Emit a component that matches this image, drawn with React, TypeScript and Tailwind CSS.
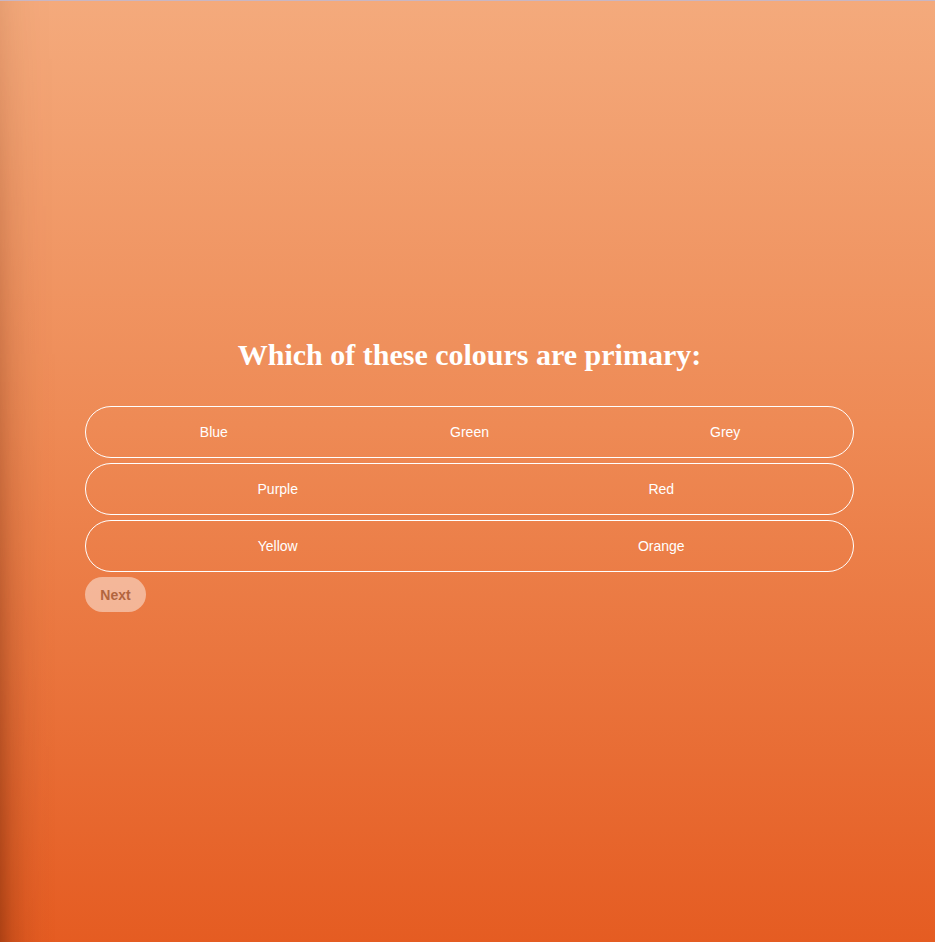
import { useState } from "react";

const rows: string[][] = [
  ["Blue", "Green", "Grey"],
  ["Purple", "Red"],
  ["Yellow", "Orange"],
];

const App = () => {
  const [picked, setPicked] = useState<string[]>([]);

  const toggle = (c: string) =>
    setPicked((p) => (p.includes(c) ? p.filter((x) => x !== c) : [...p, c]));

  return (
    <div className="relative min-h-screen h-[942px] overflow-hidden border-t border-[#c8b6c4] bg-[linear-gradient(to_bottom,#f4aa7c_0%,#ee8a55_45%,#e55c22_100%)]">
      <div className="pointer-events-none absolute inset-y-0 left-0 w-[56px] bg-[linear-gradient(to_right,rgba(90,25,0,0.4)_0px,rgba(90,25,0,0.2)_12px,rgba(90,25,0,0.08)_26px,rgba(90,25,0,0.02)_42px,rgba(90,25,0,0)_56px)] [mask-image:linear-gradient(to_bottom,rgba(0,0,0,0.2),rgba(0,0,0,1))]"></div>
      <div className="relative ml-[85px] w-[769px] pt-[335px] flex flex-col">
        <h1 className="text-center text-[30px] font-bold text-white leading-[38px] mb-[32px] font-['Liberation_Serif',serif]">
          Which of these colours are primary:
        </h1>
        <div className="flex flex-col gap-[5px]">
          {rows.map((row, i) => (
            <div
              key={i}
              className="flex h-[52px] items-center rounded-full border border-white"
            >
              {row.map((c) => (
                <button
                  key={c}
                  onClick={() => toggle(c)}
                  className={`flex-1 h-full pt-[1px] text-[14px] text-white font-['Liberation_Sans',Arial,sans-serif] ${
                    picked.includes(c) ? "font-bold" : ""
                  }`}
                >
                  {c}
                </button>
              ))}
            </div>
          ))}
        </div>
        <div className="mt-[5px]">
          <button
            disabled={picked.length === 0}
            className="h-[35px] w-[61px] pt-[1px] rounded-full bg-white/45 text-[14px] font-bold text-[#b2653f] font-['Liberation_Sans',Arial,sans-serif]"
          >
            Next
          </button>
        </div>
      </div>
    </div>
  );
};

export default App;
